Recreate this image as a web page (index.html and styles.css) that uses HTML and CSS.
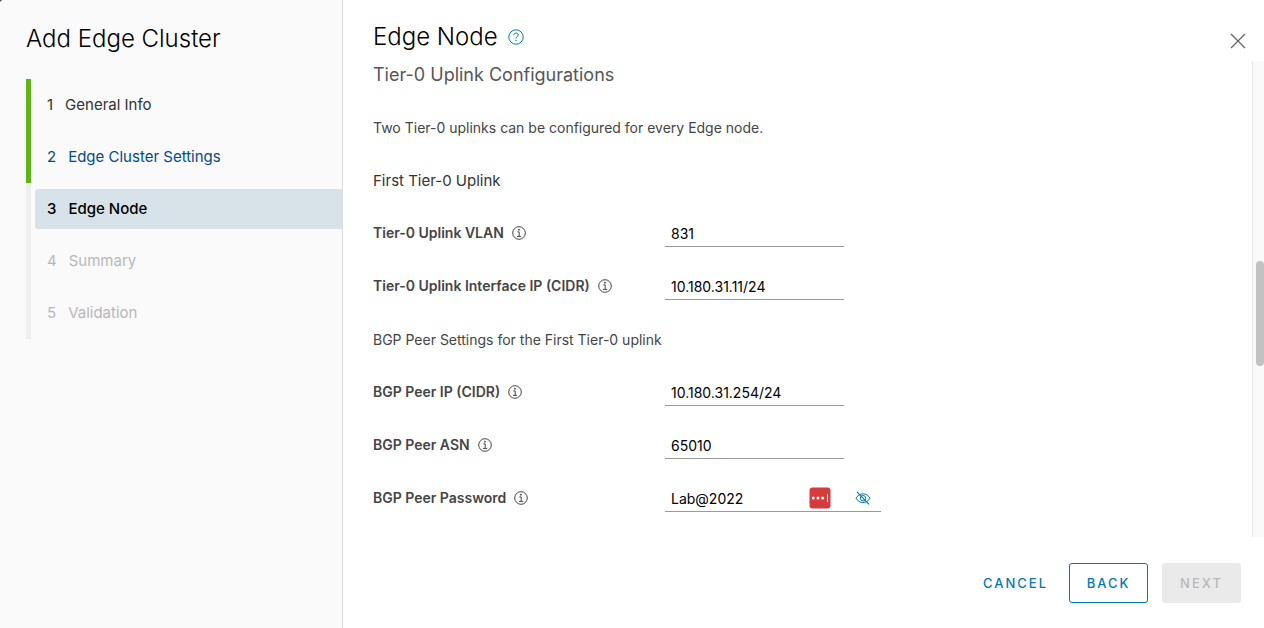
FILE: index.html
```html
<!DOCTYPE html>
<html lang="en">
<head>
    <meta charset="UTF-8">
    <meta name="viewport" content="width=device-width, initial-scale=1.0">
    <title>Add Edge Cluster</title>
    <link rel="stylesheet" href="styles.css">
</head>
<body>
    <!-- shared icons -->
    <svg class="icon-defs" aria-hidden="true">
        <symbol id="icon-info" viewBox="0 0 14 14">
            <circle cx="7" cy="7" r="6.3" fill="none" stroke="currentColor"/>
            <circle cx="6.9" cy="3.7" r="0.9" fill="currentColor"/>
            <path d="M5.3 5.9H7.2V10.3M5 10.4H9.2" fill="none" stroke="currentColor"/>
        </symbol>
    </svg>

    <div class="wizard">
        <aside class="sidebar">
            <h1>Add Edge Cluster</h1>
            <nav>
                <ol class="steps">
                    <li class="complete"><a href="#general"><span>1</span>General Info</a></li>
                    <li class="complete"><a class="visited" href="#settings"><span>2</span>Edge Cluster Settings</a></li>
                    <li><a class="active" href="#node" aria-current="step"><span>3</span>Edge Node</a></li>
                    <li><a class="disabled" href="#summary" aria-disabled="true"><span>4</span>Summary</a></li>
                    <li><a class="disabled" href="#validation" aria-disabled="true"><span>5</span>Validation</a></li>
                </ol>
            </nav>
        </aside>

        <main class="content">
            <header class="content-header">
                <h2>Edge Node</h2>
                <button class="icon-btn help-btn" type="button" aria-label="Help">
                    <svg width="16" height="16" viewBox="0 0 16 16" fill="none" stroke="currentColor">
                        <circle cx="8" cy="8" r="7.2"/>
                        <path d="M5.8 6.1C5.9 4.8 6.8 4.1 8 4.1C9.3 4.1 10.2 4.9 10.2 6C10.2 7.6 8 7.7 8 9.5"/>
                        <circle cx="8" cy="11.5" r="0.7" fill="currentColor" stroke="none"/>
                    </svg>
                </button>
                <button class="icon-btn close-btn" type="button" aria-label="Close">
                    <svg width="16" height="16" viewBox="0 0 16 16" fill="none" stroke="currentColor" stroke-width="1.3">
                        <path d="M1 1L15 15M15 1L1 15"/>
                    </svg>
                </button>
            </header>

            <div class="content-body">
                <form class="form" id="edgeForm">
                    <h3>Tier-0 Uplink Configurations</h3>
                    <p class="row">Two Tier-0 uplinks can be configured for every Edge node.</p>
                    <h4 class="row">First Tier-0 Uplink</h4>
                    <div class="row">
                        <label for="vlan">Tier-0 Uplink VLAN <svg class="info"><use href="#icon-info"/></svg></label>
                        <input type="text" id="vlan" value="831">
                    </div>
                    <div class="row">
                        <label for="interfaceIp">Tier-0 Uplink Interface IP (CIDR) <svg class="info"><use href="#icon-info"/></svg></label>
                        <input type="text" id="interfaceIp" value="10.180.31.11/24">
                    </div>
                    <p class="row">BGP Peer Settings for the First Tier-0 uplink</p>
                    <div class="row">
                        <label for="peerIp">BGP Peer IP (CIDR) <svg class="info"><use href="#icon-info"/></svg></label>
                        <input type="text" id="peerIp" value="10.180.31.254/24">
                    </div>
                    <div class="row">
                        <label for="peerAsn">BGP Peer ASN <svg class="info"><use href="#icon-info"/></svg></label>
                        <input type="text" id="peerAsn" value="65010">
                    </div>
                    <div class="row">
                        <label for="peerPassword">BGP Peer Password <svg class="info"><use href="#icon-info"/></svg></label>
                        <div class="password">
                            <input type="text" id="peerPassword" value="Lab@2022">
                            <button class="icon-btn" type="button" aria-label="Fill password">
                                <svg width="22" height="22" viewBox="0 0 22 22">
                                    <rect x="0.5" y="0.5" width="21" height="21" rx="3" fill="#d83b3b"/>
                                    <circle cx="4.3" cy="11" r="1.5" fill="#fff"/>
                                    <circle cx="9" cy="11" r="1.5" fill="#fff"/>
                                    <circle cx="13.7" cy="11" r="1.5" fill="#fff"/>
                                    <path d="M18.5 7V15" stroke="#fff" stroke-width="1.1"/>
                                </svg>
                            </button>
                            <button class="icon-btn eye-btn" type="button" aria-label="Hide password">
                                <svg width="16" height="14" viewBox="0 0 16 14" fill="none" stroke="currentColor">
                                    <path d="M1 7.2C2.6 4.4 5 2.8 8 2.8C11 2.8 13.4 4.4 15 7.2C13.4 10 11 11.5 8 11.5C5 11.5 2.6 10 1 7.2Z"/>
                                    <circle cx="8" cy="7.2" r="2.7"/>
                                    <path d="M2 0.8L14 13.4" stroke-width="1.2"/>
                                </svg>
                            </button>
                        </div>
                    </div>
                </form>
                <div class="scrollbar"><div class="thumb"></div></div>
            </div>

            <footer class="content-footer">
                <button class="btn btn-link" type="button">CANCEL</button>
                <button class="btn btn-outline" type="button">BACK</button>
                <button class="btn" type="submit" form="edgeForm" disabled>NEXT</button>
            </footer>
        </main>
    </div>
</body>
</html>
```

FILE: styles.css
```css
* {
    box-sizing: border-box;
}

body {
    margin: 0;
    background-color: #4a5560;
    color: #454545;
    font-family: Inter, 'Liberation Sans', sans-serif;
    font-size: 14px;
    line-height: 20px;
}

h1, h2, h3, h4, p {
    margin: 0;
    font-weight: 400;
}

button, input {
    font: inherit;
}

.icon-defs {
    display: none;
}

.wizard {
    display: flex;
    min-height: 100vh;
    background-color: #fff;
    border-top-left-radius: 4px;
    overflow: hidden;
}

/* Step list */
.sidebar {
    flex: 0 0 343px;
    padding: 23px 0 0 26px;
    background-color: #fafafa;
    border-right: 1px solid #ddd;
}

h1, h2 {
    color: #000;
    font-size: 24px;
    font-weight: 300;
    line-height: 32px;
}

.steps {
    margin: 24px 0 0;
    padding: 0;
    list-style: none;
}

.steps li {
    padding: 6px 0 6px 4px;
    border-left: 5px solid #eee;
}

.steps li.complete {
    border-left-color: #60b515;
}

.steps a {
    display: flex;
    gap: 12px;
    padding: 10px 12px;
    border-radius: 3px 0 0 3px;
    color: #333;
    font-size: 15px;
    text-decoration: none;
}

.steps a.visited {
    color: #004b8a;
}

.steps a.active {
    background-color: #d8e3e9;
    color: #000;
    font-weight: 500;
}

.steps a.disabled {
    color: #b8b8b8;
}

/* Page */
.content {
    flex: 1;
    display: flex;
    flex-direction: column;
    min-width: 0;
}

.content-header {
    display: flex;
    align-items: center;
    gap: 10px;
    height: 61px;
    padding: 13px 18px 0 30px;
}

.icon-btn {
    display: flex;
    padding: 0;
    background: none;
    border: none;
    cursor: pointer;
}

.help-btn,
.eye-btn {
    color: #0079b8;
}

.close-btn {
    margin-left: auto;
    padding-top: 8px;
    color: #666;
}

.content-body {
    flex: 1;
    display: flex;
}

.form {
    flex: 1;
    padding: 0 30px 12px;
}

h3 {
    margin-bottom: 12px;
    color: #565656;
    font-size: 18px;
    line-height: 28px;
}

.row {
    display: flex;
    align-items: center;
    height: 53px;
}

h4 {
    color: #333;
    font-size: 15px;
}

label {
    display: flex;
    align-items: center;
    gap: 8px;
    flex: 0 0 292px;
    padding-bottom: 2px;
    font-weight: 600;
}

.info {
    width: 14px;
    height: 14px;
}

input {
    width: 179px;
    height: 27px;
    padding: 0 6px;
    background: none;
    border: none;
    border-bottom: 1px solid #999;
    color: #000;
}

input:focus {
    outline: none;
    border-bottom-color: #0079b8;
}

.password {
    display: flex;
    align-items: center;
    width: 216px;
    height: 27px;
    padding-right: 10px;
    border-bottom: 1px solid #999;
}

.password input {
    flex: 1;
    min-width: 0;
    border: none;
}

.eye-btn {
    margin-left: 24px;
}

.scrollbar {
    flex: 0 0 12px;
    background-color: #fafafa;
    border-left: 1px solid #e6e6e6;
    position: relative;
}

.thumb {
    position: absolute;
    top: 42%;
    right: 0;
    width: 8px;
    height: 22%;
    border-radius: 4px;
    background-color: #c2c2c2;
}

/* Buttons */
.content-footer {
    display: flex;
    justify-content: flex-end;
    padding: 26px 23px 25px;
}

.btn {
    height: 40px;
    min-width: 79px;
    margin-left: 14px;
    padding: 0 16px;
    background-color: #fff;
    border: 1px solid #0079b8;
    border-radius: 3px;
    color: #0079b8;
    font-size: 13px;
    font-weight: 500;
    letter-spacing: 2px;
    cursor: pointer;
}

.btn-link {
    min-width: 0;
    padding: 0 6px;
    border-color: transparent;
}

.btn:disabled {
    background-color: #eaeaea;
    border-color: #eaeaea;
    color: #b8b8b8;
    cursor: default;
}
```
